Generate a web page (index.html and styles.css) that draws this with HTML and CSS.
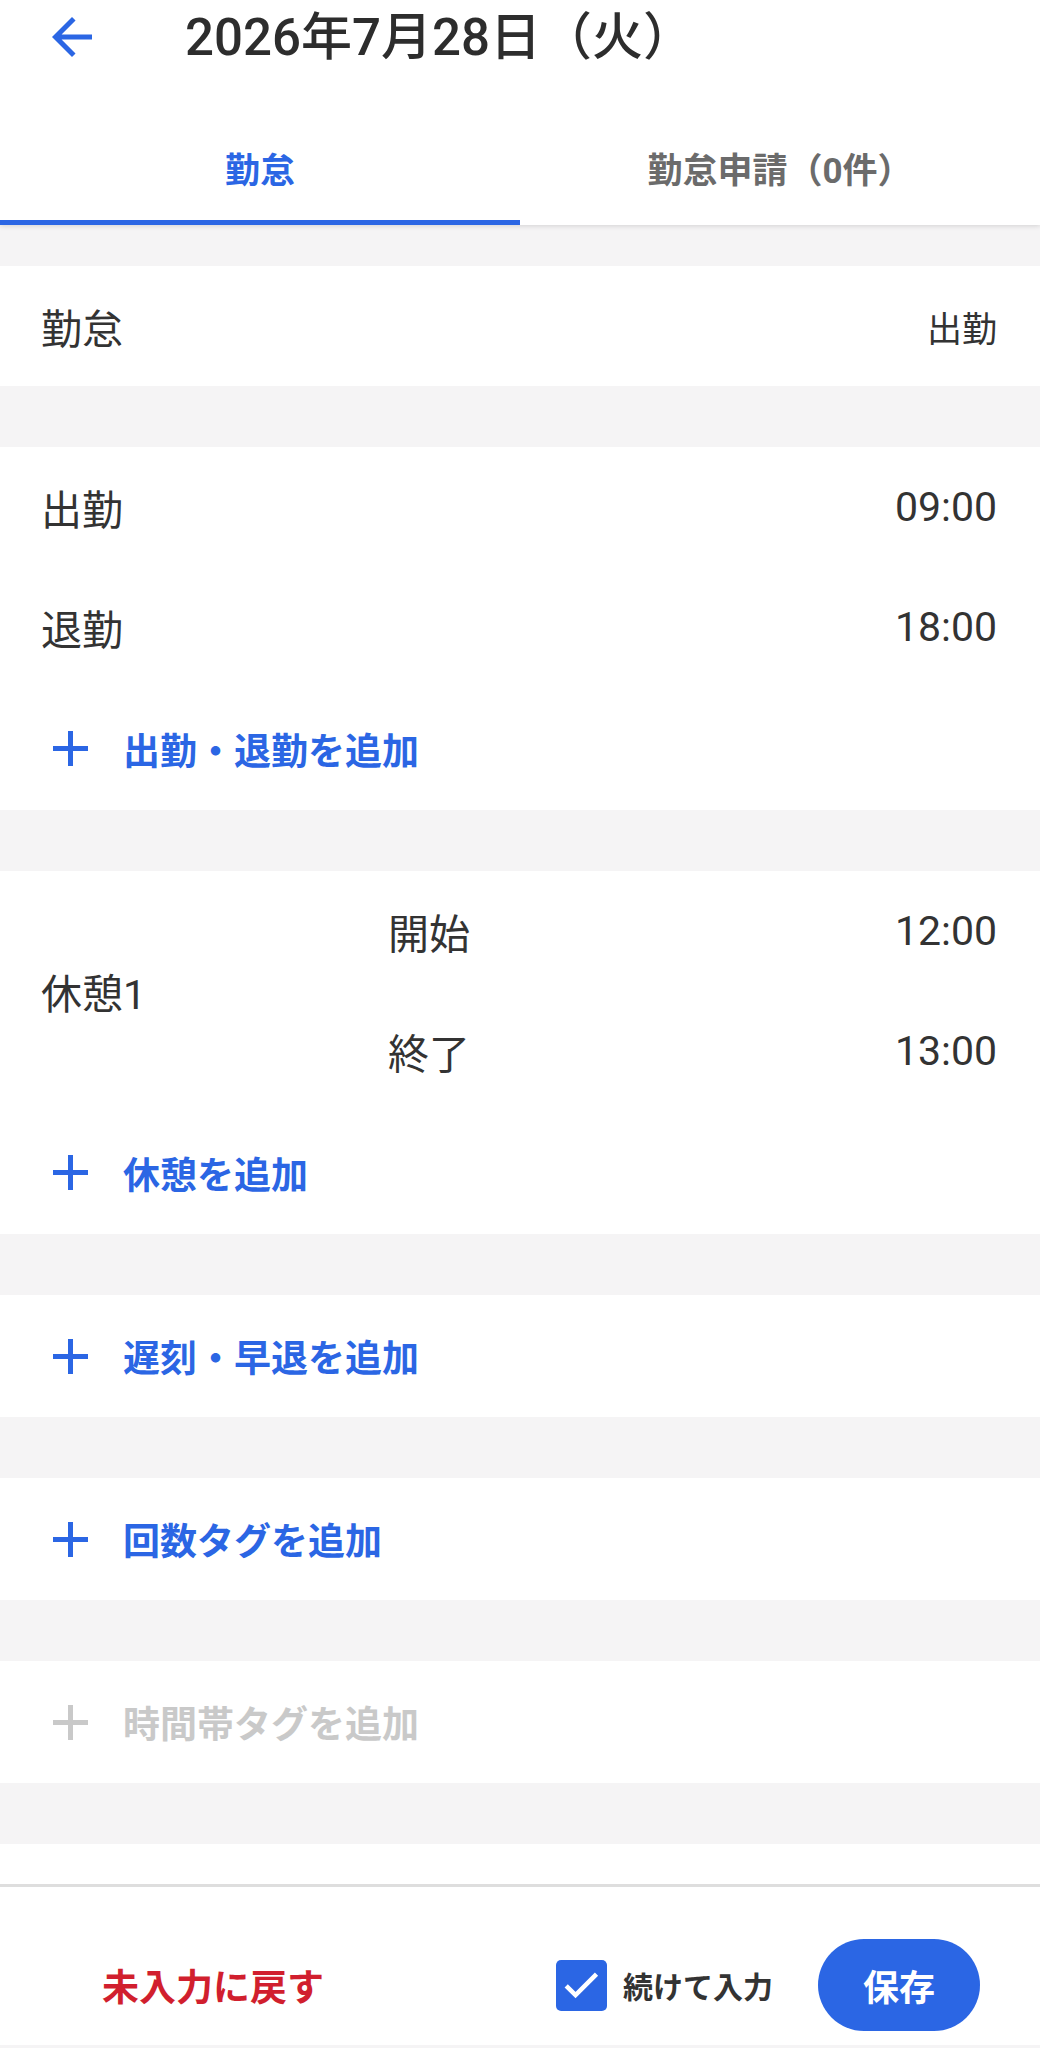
FILE: index.html
```html
<!DOCTYPE html>
<html lang="ja">
<head>
    <meta charset="UTF-8">
    <meta name="viewport" content="width=device-width, initial-scale=1.0">
    <title>勤怠入力</title>
    <link rel="stylesheet" href="styles.css">
</head>
<body>
    <header class="app-header">
        <div class="toolbar">
            <svg class="back-icon" viewBox="0 0 24 24" width="60" height="60">
                <path d="M20 11H7.83l5.59-5.59L12 4l-8 8 8 8 1.41-1.41L7.83 13H20v-2z"/>
            </svg>
            <h1 class="toolbar-title">2026年7月28日（火）</h1>
        </div>
        <nav class="tabs">
            <div class="tab active">勤怠</div>
            <div class="tab">勤怠申請（0件）</div>
        </nav>
    </header>

    <main class="content">
        <!-- 勤怠区分 -->
        <section class="card first">
            <div class="row">
                <span class="label">勤怠</span>
                <span class="value">出勤</span>
            </div>
        </section>

        <!-- 出勤・退勤 -->
        <section class="card">
            <div class="row">
                <span class="label">出勤</span>
                <span class="time">09:00</span>
            </div>
            <div class="row">
                <span class="label">退勤</span>
                <span class="time">18:00</span>
            </div>
            <div class="add-row">
                <svg class="plus" viewBox="0 0 35 35" width="35" height="35"><path d="M17.5 0v35M0 17.5h35"/></svg>
                <span>出勤・退勤を追加</span>
            </div>
        </section>

        <!-- 休憩 -->
        <section class="card">
            <div class="break">
                <span class="label">休憩1</span>
                <div class="break-times">
                    <div class="row sub">
                        <span class="label">開始</span>
                        <span class="time">12:00</span>
                    </div>
                    <div class="row sub">
                        <span class="label">終了</span>
                        <span class="time">13:00</span>
                    </div>
                </div>
            </div>
            <div class="add-row">
                <svg class="plus" viewBox="0 0 35 35" width="35" height="35"><path d="M17.5 0v35M0 17.5h35"/></svg>
                <span>休憩を追加</span>
            </div>
        </section>

        <section class="card">
            <div class="add-row single">
                <svg class="plus" viewBox="0 0 35 35" width="35" height="35"><path d="M17.5 0v35M0 17.5h35"/></svg>
                <span>遅刻・早退を追加</span>
            </div>
        </section>

        <section class="card">
            <div class="add-row single">
                <svg class="plus" viewBox="0 0 35 35" width="35" height="35"><path d="M17.5 0v35M0 17.5h35"/></svg>
                <span>回数タグを追加</span>
            </div>
        </section>

        <section class="card">
            <div class="add-row single disabled">
                <svg class="plus" viewBox="0 0 35 35" width="35" height="35"><path d="M17.5 0v35M0 17.5h35"/></svg>
                <span>時間帯タグを追加</span>
            </div>
        </section>

        <section class="card tail"></section>
    </main>

    <footer class="action-bar">
        <button class="reset-button" type="button">未入力に戻す</button>
        <div class="actions">
            <label class="continue">
                <svg class="checkbox" viewBox="3 3 18 18" width="51" height="51">
                    <rect x="3" y="3" width="18" height="18" rx="1.8"/>
                    <path d="M6.6 12.1l3.3 3.3 7.4-7.4"/>
                </svg>
                <span>続けて入力</span>
            </label>
            <button class="save-button" type="button">保存</button>
        </div>
    </footer>
</body>
</html>
```

FILE: styles.css
```css
body {
    margin: 0;
    width: 1040px;
    font-family: Roboto, "Noto Sans CJK JP", sans-serif;
    color: #333;
    background-color: #f5f4f5;
}
button {
    font-family: inherit;
    border: none;
    background: none;
    padding: 0;
    cursor: pointer;
}

/* ヘッダー */
.app-header {
    position: relative;
    z-index: 1;
    background-color: #fff;
    box-shadow: 0 1px 5px rgba(0, 0, 0, 0.14);
}
.toolbar {
    display: flex;
    align-items: center;
    height: 74px;
    padding-left: 42px;
}
.back-icon {
    fill: #2b66e4;
}
.toolbar-title {
    margin: 0 0 0 83px;
    font-size: 51px;
    font-weight: 500;
    color: #2d2d2d;
    line-height: 1;
}
.tabs {
    display: flex;
}
.tab {
    flex: 1;
    height: 151px;
    box-sizing: border-box;
    padding-top: 40px;
    display: flex;
    align-items: center;
    justify-content: center;
    border-bottom: 5px solid transparent;
    font-size: 35px;
    font-weight: 700;
    color: #6b6b6b;
}
.tab.active {
    color: #2b66e4;
    border-bottom-color: #2b66e4;
}

/* 本文 */
.content {
    display: flex;
    flex-direction: column;
    gap: 61px;
    padding-top: 41px;
}
.card {
    background-color: #fff;
}
.card.tail {
    height: 40px;
}
.row {
    display: flex;
    align-items: center;
    justify-content: space-between;
    height: 120px;
    padding: 0 43px 0 41px;
}
.label {
    font-size: 41px;
}
.value {
    font-size: 35px;
}
.time {
    font-size: 41px;
}
.break {
    display: grid;
    grid-template-columns: 347px 1fr;
    align-items: center;
    padding-left: 41px;
}
.row.sub {
    padding-left: 0;
}
.add-row {
    display: flex;
    align-items: center;
    gap: 35px;
    height: 123px;
    padding-left: 53px;
    font-size: 37px;
    font-weight: 700;
    color: #2b66e4;
}
.add-row.single {
    height: 122px;
}
.plus {
    stroke: currentColor;
    stroke-width: 5;
}
.add-row.disabled {
    color: #c9c9c9;
}

/* 下部バー */
.action-bar {
    display: flex;
    align-items: center;
    justify-content: space-between;
    height: 161px;
    box-sizing: border-box;
    padding: 38px 60px 0 102px;
    border-top: 3px solid #dedede;
    background-color: #fff;
}
.reset-button {
    font-size: 37px;
    font-weight: 700;
    color: #d11f2e;
}
.actions {
    display: flex;
    align-items: center;
    gap: 45px;
}
.continue {
    display: flex;
    align-items: center;
    gap: 16px;
    font-size: 30px;
    font-weight: 700;
    color: #333;
}
.checkbox rect {
    fill: #2b66e4;
}
.checkbox path {
    fill: none;
    stroke: #fff;
    stroke-width: 1.6;
}
.save-button {
    width: 162px;
    height: 92px;
    border-radius: 46px;
    background-color: #2b66e4;
    color: #fff;
    font-size: 36px;
    font-weight: 700;
}
```
